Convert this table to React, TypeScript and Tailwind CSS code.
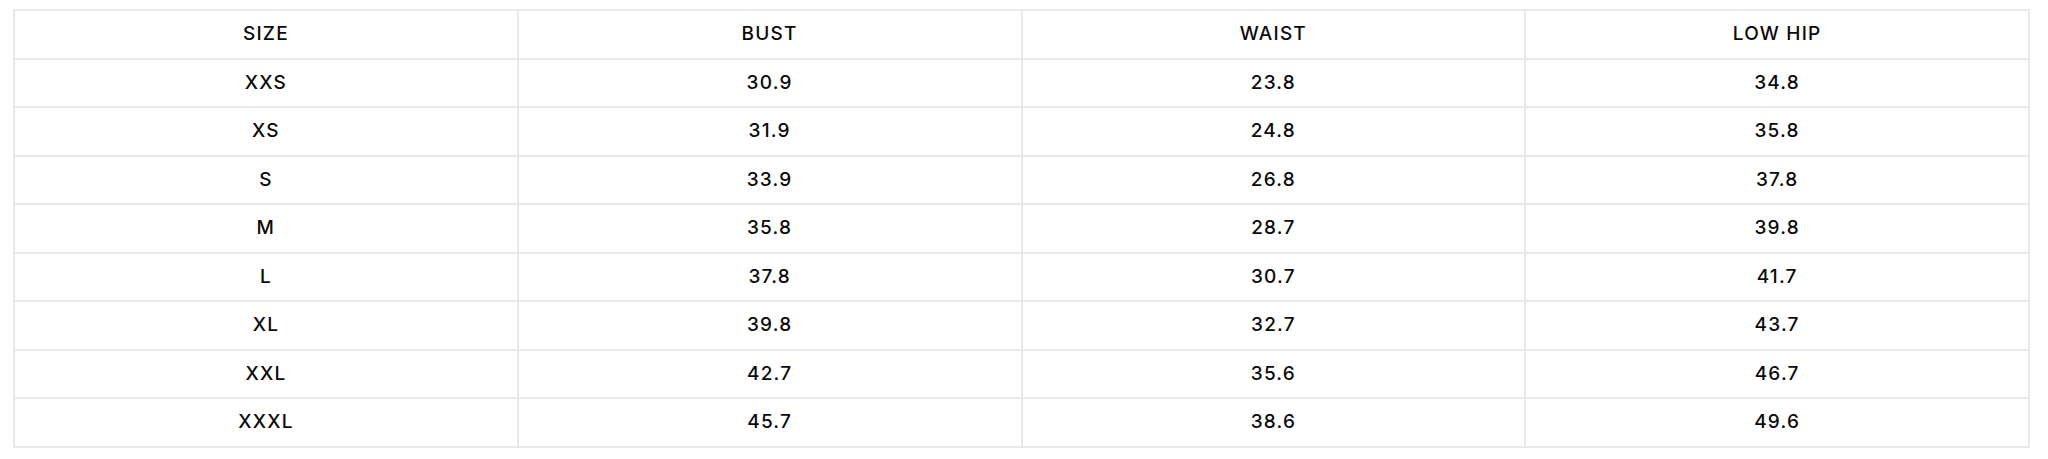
import React from "react";

const rows: [string, string, string, string][] = [
  ["XXS", "30.9", "23.8", "34.8"],
  ["XS", "31.9", "24.8", "35.8"],
  ["S", "33.9", "26.8", "37.8"],
  ["M", "35.8", "28.7", "39.8"],
  ["L", "37.8", "30.7", "41.7"],
  ["XL", "39.8", "32.7", "43.7"],
  ["XXL", "42.7", "35.6", "46.7"],
  ["XXXL", "45.7", "38.6", "49.6"],
];

const headers = ["SIZE", "BUST", "WAIST", "LOW HIP"];

export default function App() {
  return (
    <div className="w-[2048px] h-[459px] bg-white pl-[13px] pt-[9px] font-['Inter',sans-serif] text-[#0a0a0a]">
      <table className="w-[2017px] table-fixed border-collapse">
        <thead>
          <tr className="h-[48.5px]">
            {headers.map((h) => (
              <th
                key={h}
                className="border-2 border-[#e9e9e9] text-center align-middle text-[19px] font-medium tracking-[1.2px]"
              >
                {h}
              </th>
            ))}
          </tr>
        </thead>
        <tbody>
          {rows.map((r) => (
            <tr key={r[0]} className="h-[48.5px]">
              {r.map((c, i) => (
                <td
                  key={i}
                  className="border-2 border-[#e9e9e9] text-center align-middle text-[19px] font-medium tracking-[1.2px]"
                >
                  {c}
                </td>
              ))}
            </tr>
          ))}
        </tbody>
      </table>
    </div>
  );
}
